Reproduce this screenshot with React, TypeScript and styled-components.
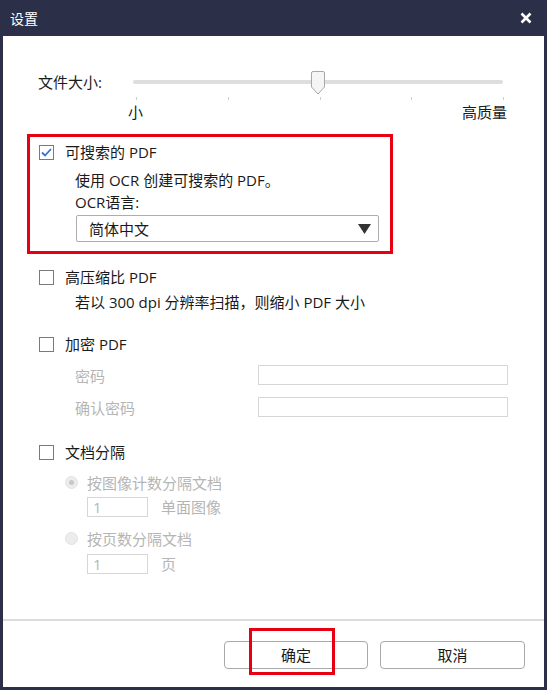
import React from "react";
import styled, { createGlobalStyle } from "styled-components";

const GlobalStyle = createGlobalStyle`
  html, body {
    margin: 0;
    padding: 0;
    background: #2b3048;
  }
  body {
    font-family: "Open Sans", "Noto Sans CJK SC", sans-serif;
    font-size: 15px;
    color: #1a1a1a;
  }
`;

const Dialog = styled.div`
  width: 547px;
  height: 690px;
  box-sizing: border-box;
  background: #2b3048;
  padding: 0 3px 3px 3px;
  display: flex;
  flex-direction: column;
`;

const TitleBar = styled.div`
  height: 36px;
  display: flex;
  align-items: center;
  justify-content: space-between;
  padding: 0 12px 0 7px;
  color: #ffffff;
  font-size: 14px;
`;

const Body = styled.div`
  flex: 1;
  background: #ffffff;
  padding: 34px 0 0 35px;
  box-sizing: border-box;
`;

const Footer = styled.div`
  height: 68px;
  box-sizing: border-box;
  background: #ffffff;
  border-top: 2px solid #dcdcdc;
  display: flex;
  justify-content: flex-end;
  gap: 12px;
  padding: 20px 19px 0 0;
`;

const Row = styled.div<{ $mt?: number }>`
  display: flex;
  align-items: center;
  height: 22px;
  line-height: 22px;
  margin-top: ${({ $mt }) => $mt ?? 0}px;
`;

const SliderRow = styled.div`
  display: flex;
  align-items: center;
  height: 24px;
`;

const SliderLabel = styled.span`
  width: 95px;
  line-height: 22px;
`;

const SliderWrap = styled.div`
  position: relative;
  width: 370px;
  height: 24px;
  display: flex;
  align-items: center;
`;

const Track = styled.div`
  width: 100%;
  height: 4px;
  background: #dedede;
  border-radius: 2px;
`;

const Thumb = styled.svg`
  position: absolute;
  left: 178px;
  top: 1px;
`;

const Ticks = styled.div`
  width: 370px;
  margin: 3px 0 0 97px;
  padding: 0 1px;
  box-sizing: border-box;
  display: flex;
  justify-content: space-between;
`;

const Tick = styled.span`
  width: 1px;
  height: 3px;
  background: #cfcfcf;
`;

const ScaleLabels = styled.div`
  width: 379px;
  margin: 1px 0 0 90px;
  display: flex;
  justify-content: space-between;
  line-height: 22px;
`;

const Highlight = styled.div`
  width: 366px;
  box-sizing: border-box;
  margin: 11px 0 0 -11px;
  border: 3px solid #e60012;
  padding: 4px 0 9px 9px;
`;

const Section = styled.div<{ $mt: number }>`
  margin-top: ${({ $mt }) => $mt}px;
  padding-left: 1px;
`;

const Box = styled.span`
  width: 15px;
  height: 15px;
  box-sizing: border-box;
  border: 1px solid #7a7a7a;
  background: #fff;
  display: inline-flex;
  align-items: center;
  justify-content: center;
  margin-right: 11px;
  flex-shrink: 0;
`;

const Sub = styled.div<{ $mt?: number }>`
  margin: ${({ $mt }) => $mt ?? 0}px 0 0 36px;
  line-height: 22px;
`;

const Select = styled.div`
  margin: 2px 0 0 37px;
  width: 303px;
  height: 27px;
  box-sizing: border-box;
  border: 1px solid #adadad;
  border-radius: 2px;
  display: flex;
  align-items: center;
  justify-content: space-between;
  padding: 0 7px 0 12px;
`;

const FieldRow = styled.div<{ $mt: number }>`
  display: flex;
  align-items: center;
  height: 20px;
  margin: ${({ $mt }) => $mt}px 0 0 36px;
  color: #b5b5b5;
`;

const FieldLabel = styled.span`
  width: 183px;
`;

const TextField = styled.div<{ $w: number }>`
  width: ${({ $w }) => $w}px;
  height: 20px;
  box-sizing: border-box;
  border: 1px solid #d6d6d6;
  padding-left: 5px;
  line-height: 18px;
  color: #b5b5b5;
`;

const Radio = styled.span<{ $on?: boolean }>`
  width: 13px;
  height: 13px;
  border-radius: 50%;
  box-sizing: border-box;
  background: #ececec;
  border: 1px solid #e2e2e2;
  display: inline-flex;
  align-items: center;
  justify-content: center;
  margin-right: 9px;
  &::after {
    content: "";
    width: 5px;
    height: 5px;
    border-radius: 50%;
    background: ${({ $on }) => ($on ? "#c8c8c8" : "transparent")};
  }
`;

const RadioRow = styled.div<{ $mt: number }>`
  display: flex;
  align-items: center;
  height: 22px;
  margin: ${({ $mt }) => $mt}px 0 0 26px;
  color: #b5b5b5;
`;

const CountRow = styled.div<{ $mt: number }>`
  display: flex;
  align-items: center;
  gap: 13px;
  margin: ${({ $mt }) => $mt}px 0 0 48px;
  color: #b5b5b5;
`;

const ButtonWrap = styled.div`
  position: relative;
`;

const Button = styled.button<{ $w: number }>`
  width: ${({ $w }) => $w}px;
  height: 28px;
  background: #ffffff;
  border: 1px solid #a9a9a9;
  border-radius: 4px;
  font-family: inherit;
  font-size: 15px;
  color: #1a1a1a;
  padding: 0 0 2px 0;
`;

const ButtonMark = styled.div`
  position: absolute;
  left: 25px;
  top: -13px;
  width: 86px;
  height: 47px;
  box-sizing: border-box;
  border: 3px solid #e60012;
  pointer-events: none;
`;

const Check = () => (
  <svg width="11" height="9" viewBox="0 0 11 9">
    <path d="M1 4.5 L4 7.5 L10 1" fill="none" stroke="#3a6fd8" strokeWidth="1.8" />
  </svg>
);

export default function App() {
  return (
    <>
      <GlobalStyle />
      <Dialog>
        <TitleBar>
          <span>设置</span>
          <svg width="12" height="12" viewBox="0 0 12 12">
            <path d="M1.5 1.5 L10.5 10.5 M10.5 1.5 L1.5 10.5" stroke="#fff" strokeWidth="2.6" />
          </svg>
        </TitleBar>
        <Body>
          <SliderRow>
            <SliderLabel>文件大小:</SliderLabel>
            <SliderWrap>
              <Track />
              <Thumb width="14" height="24" viewBox="0 0 14 24">
                <path
                  d="M2 0.5 H12 A1.5 1.5 0 0 1 13.5 2 V16 L7 23 L0.5 16 V2 A1.5 1.5 0 0 1 2 0.5 Z"
                  fill="#f5f5f5"
                  stroke="#a8a8a8"
                />
              </Thumb>
            </SliderWrap>
          </SliderRow>
          <Ticks>
            {[0, 1, 2, 3, 4].map((i) => (
              <Tick key={i} />
            ))}
          </Ticks>
          <ScaleLabels>
            <span>小</span>
            <span>高质量</span>
          </ScaleLabels>

          <Highlight>
            <Row>
              <Box>
                <Check />
              </Box>
              可搜索的 PDF
            </Row>
            <Sub $mt={6}>使用 OCR 创建可搜索的 PDF。</Sub>
            <Sub>OCR语言:</Sub>
            <Select>
              <span>简体中文</span>
              <svg width="13" height="10" viewBox="0 0 13 10">
                <path d="M0 0 H13 L6.5 10 Z" fill="#333" />
              </svg>
            </Select>
          </Highlight>

          <Section $mt={12}>
            <Row>
              <Box />
              高压缩比 PDF
            </Row>
            <Sub $mt={3}>若以 300 dpi 分辨率扫描，则缩小 PDF 大小</Sub>
          </Section>

          <Section $mt={20}>
            <Row>
              <Box />
              加密 PDF
            </Row>
            <FieldRow $mt={10}>
              <FieldLabel>密码</FieldLabel>
              <TextField $w={250} />
            </FieldRow>
            <FieldRow $mt={12}>
              <FieldLabel>确认密码</FieldLabel>
              <TextField $w={250} />
            </FieldRow>
          </Section>

          <Section $mt={24}>
            <Row>
              <Box />
              文档分隔
            </Row>
            <RadioRow $mt={8}>
              <Radio $on />
              按图像计数分隔文档
            </RadioRow>
            <CountRow $mt={3}>
              <TextField $w={61}>1</TextField>
              <span>单面图像</span>
            </CountRow>
            <RadioRow $mt={10}>
              <Radio />
              按页数分隔文档
            </RadioRow>
            <CountRow $mt={4}>
              <TextField $w={61}>1</TextField>
              <span>页</span>
            </CountRow>
          </Section>
        </Body>
        <Footer>
          <ButtonWrap>
            <Button $w={144}>确定</Button>
            <ButtonMark />
          </ButtonWrap>
          <Button $w={145}>取消</Button>
        </Footer>
      </Dialog>
    </>
  );
}
